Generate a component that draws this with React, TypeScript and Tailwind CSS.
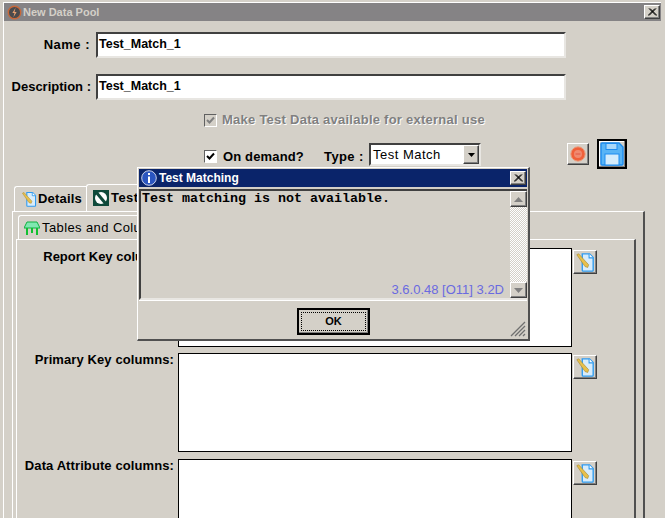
import React from 'react';

const raised = 'border border-t-white border-l-white border-b-[#404040] border-r-[#404040] shadow-[inset_-1px_-1px_0_#808080]';
const sunken = 'border-2 border-t-[#404040] border-l-[#404040] border-b-[#e8e6e2] border-r-[#e8e6e2]';
const boldText = 'font-bold text-black text-[13px] tracking-[0.1px]';

function LogoIcon() {
  return (
    <svg width="15" height="15" viewBox="0 0 14 14">
      <circle cx="7" cy="7" r="5.8" fill="#4a4a4c" stroke="#c8683a" strokeWidth="1.3" />
      <path d="M8 2.5 5 7.5h2L6 11.5l3-5H7z" fill="#e8a070" />
    </svg>
  );
}

function CloseX() {
  return (
    <svg width="9" height="8" viewBox="0 0 9 8">
      <path d="M1 0.5 8 7.5M2 0.5 9 7.5M8 0.5 1 7.5M7 0.5 0 7.5" stroke="#000" strokeWidth="1" />
    </svg>
  );
}

function DocPencil({ size = 22 }: { size?: number }) {
  return (
    <svg width={size} height={size} viewBox="0 0 22 22">
      <path d="M8 2h8l4 4v14a1 1 0 0 1-1 1H9a1 1 0 0 1-1-1z" fill="#d8ecfb" stroke="#2f9bf0" strokeWidth="1.5" />
      <path d="M15.5 2v4.5H20" fill="#fff" stroke="#2f9bf0" strokeWidth="1.2" />
      <path d="M2 3 4 2 15 14l-1 3-3-1z" fill="#e8c04c" stroke="#a88a30" strokeWidth="0.7" />
    </svg>
  );
}

function TableIcon() {
  return (
    <svg width="16" height="16" viewBox="0 0 16 16">
      <path d="M3 2h10l3 6H0z" fill="#7fe8b0" stroke="#10b040" strokeWidth="1" />
      <path d="M3 8v7M13 8v7M8 8v5" stroke="#10c030" strokeWidth="2" />
    </svg>
  );
}

function MatchIcon() {
  return (
    <svg width="16" height="16" viewBox="0 0 16 16">
      <rect width="16" height="16" fill="#0f4a3a" />
      <circle cx="8" cy="8" r="6" fill="#fff" />
      <path d="M3 2 13 14" stroke="#0f4a3a" strokeWidth="3" />
    </svg>
  );
}

function InfoIcon() {
  return (
    <svg width="16" height="16" viewBox="0 0 16 16">
      <circle cx="8" cy="8" r="7.3" fill="#2a55c0" stroke="#c8d0e8" strokeWidth="1" />
      <rect x="7" y="3" width="2" height="2" fill="#fff" />
      <rect x="7" y="6.5" width="2" height="6.5" fill="#fff" />
    </svg>
  );
}

function StopIcon() {
  return (
    <svg width="16" height="16" viewBox="0 0 16 16">
      <circle cx="8" cy="8" r="7.2" fill="#f0603a" stroke="#eaa080" strokeWidth="1" />
      <circle cx="8" cy="8" r="4" fill="#f08a70" />
      <rect x="5.5" y="7" width="5" height="2" fill="#e8705a" />
    </svg>
  );
}

function SaveIcon() {
  return (
    <svg width="24" height="24" viewBox="0 0 24 24">
      <path d="M1 2a1 1 0 0 1 1-1h17l4 4v17a1 1 0 0 1-1 1H2a1 1 0 0 1-1-1z" fill="#58b4f6" stroke="#1c8cf0" strokeWidth="1.4" />
      <rect x="6" y="1.5" width="11" height="6" fill="#a8d8fa" stroke="#1c8cf0" strokeWidth="1" />
      <rect x="5" y="12" width="14" height="11" fill="#d4ecfc" stroke="#1c8cf0" strokeWidth="1" />
    </svg>
  );
}

function Checkbox({ disabled }: { disabled?: boolean }) {
  return (
    <span className={`flex h-[13px] w-[13px] shrink-0 items-center justify-center border border-t-[#606060] border-l-[#606060] border-b-white border-r-white ${disabled ? 'bg-[#d4d0c8]' : 'bg-white'}`}>
      <svg width="9" height="9" viewBox="0 0 9 9">
        <path d="M1 4l2.5 2.5L8 1.5" fill="none" stroke={disabled ? '#808080' : '#000'} strokeWidth="2" />
      </svg>
    </span>
  );
}

function ColumnRow({ label, height, className, labelClass = '' }: { label: string; height: string; className: string; labelClass?: string }) {
  return (
    <div className={`flex ${className}`}>
      <div className={`w-[161px] shrink-0 pr-[4px] text-right leading-[14px] ${boldText} ${labelClass}`}>{label}</div>
      <div className={`w-[394px] shrink-0 border border-black bg-white ${height}`} />
      <div className={`ml-px mt-[2px] flex h-[24px] w-[24px] shrink-0 items-center justify-center ${raised} bg-[#d4d0c8]`}>
        <DocPencil size={20} />
      </div>
    </div>
  );
}

export default function App() {
  return (
    <div className="relative h-[518px] w-[665px] overflow-hidden bg-[#d4d0c8] font-['Liberation_Sans',sans-serif]">
      {/* Main window */}
      <div className="ml-[3px] mt-[2px] h-[516px] w-[658px] border-l border-t border-white">
        <div className="flex h-[18px] items-center justify-between bg-[#858385] pl-[3px] pr-[1px]">
          <div className="flex items-center gap-[1px]">
            <LogoIcon />
            <span className="text-[11px] font-bold text-[#d4d0c8]">New Data Pool</span>
          </div>
          <button className={`flex h-[14px] w-[16px] items-center justify-center bg-[#d4d0c8] ${raised}`}>
            <CloseX />
          </button>
        </div>

        <div className="mt-[11px] flex items-center">
          <div className="w-[86px] whitespace-nowrap text-right text-[13px] font-bold tracking-[0.5px] text-black">Name :</div>
          <div className={`ml-[6px] flex h-[26px] w-[470px] items-center bg-white pb-[2px] pl-[1px] text-[12.5px] font-bold text-black ${sunken}`}>Test_Match_1</div>
        </div>
        <div className="mt-[16px] flex items-center">
          <div className="w-[87px] whitespace-nowrap text-right text-[13px] font-bold text-black">Description :</div>
          <div className={`ml-[5px] flex h-[26px] w-[470px] items-center bg-white pb-[2px] pl-[1px] text-[12.5px] font-bold text-black ${sunken}`}>Test_Match_1</div>
        </div>

        <div className="mt-[13px] flex h-[14px] items-center pl-[200px]">
          <Checkbox disabled />
          <span className="ml-[5px] whitespace-nowrap text-[13px] font-bold tracking-[0.25px] text-[#808080] [text-shadow:1px_1px_0_#ffffff]">Make Test Data available for external use</span>
        </div>

        <div className="mt-[16px] flex h-[26px] items-start">
          <div className="mt-[4px] flex items-center pl-[200px]">
            <Checkbox />
            <span className="ml-[6px] w-[101px] whitespace-nowrap text-[13px] font-bold tracking-[0.15px] text-black">On demand?</span>
            <span className="w-[45px] whitespace-nowrap text-[13px] font-bold tracking-[0.4px] text-black">Type :</span>
          </div>
          <div className={`flex h-[23px] w-[112px] items-center justify-between bg-white pl-[2px] text-[13px] tracking-[0.5px] text-black ${sunken}`}>
            Test Match
            <span className={`flex h-[19px] w-[16px] items-center justify-center bg-[#d4d0c8] ${raised}`}>
              <svg width="7" height="4" viewBox="0 0 7 4"><path d="M0 0h7L3.5 4z" fill="#000" /></svg>
            </span>
          </div>
          <button className={`ml-[86px] flex h-[22px] w-[22px] items-center justify-center bg-[#d4d0c8] ${raised}`}>
            <StopIcon />
          </button>
          <button className="-mt-[4px] ml-[8px] flex h-[30px] w-[30px] items-center justify-center border-2 border-black bg-[#d4d0c8] shadow-[inset_-1px_-1px_0_#808080,inset_1px_1px_0_#ffffff]">
            <SaveIcon />
          </button>
        </div>

        {/* Tabs */}
        <div className="ml-[10px] mt-[15px] flex h-[27px] items-end">
          <div className="flex h-[25px] w-[72px] items-center gap-[1px] rounded-tl-[3px] border-l border-t border-white pl-[6px]">
            <DocPencil size={16} />
            <span className="text-[13px] font-bold tracking-[0.2px] text-black">Details</span>
          </div>
          <div className="flex h-[27px] w-[120px] items-center gap-[2px] rounded-tl-[3px] border-l border-t border-white pl-[6px]">
            <MatchIcon />
            <span className="whitespace-nowrap text-[13px] font-bold tracking-[0.4px] text-black">Test</span>
          </div>
        </div>

        <div className="ml-[8px] h-[400px] w-[633px] border-l border-r-2 border-t border-white border-r-[#505050] pl-[3px] pr-[8px]">
          <div className="ml-[2px] mt-[3px] flex h-[24px] w-[170px] items-center gap-[2px] rounded-tl-[3px] border-l border-t border-white pl-[5px]">
            <TableIcon />
            <span className="whitespace-nowrap text-[13px] tracking-[0.4px] text-black">Tables and Columns</span>
          </div>
          <div className="h-[400px] w-[620px] border-l border-r-2 border-t border-white border-r-[#505050] pt-[8px]">
            <ColumnRow label="Report Key columns:" height="h-[99px]" className="" labelClass="pt-[2px] tracking-[0px]" />
            <ColumnRow label="Primary Key columns:" height="h-[99px]" className="mt-[6px]" />
            <ColumnRow label="Data Attribute columns:" height="h-[99px]" className="mt-[7px]" />
          </div>
        </div>
      </div>

      {/* Test Matching dialog */}
      <div className="absolute left-[137px] top-[167px] h-[174px] w-[393px] border border-b-2 border-r-2 border-l-white border-t-white border-b-[#505050] border-r-[#505050] bg-[#d4d0c8] p-px">
        <div className="flex h-[18px] items-center justify-between bg-[#0a246a] pl-[2px] pr-[1px]">
          <div className="flex items-center gap-[2px]">
            <InfoIcon />
            <span className="text-[12px] font-bold text-white">Test Matching</span>
          </div>
          <button className={`flex h-[14px] w-[16px] items-center justify-center bg-[#d4d0c8] ${raised}`}>
            <CloseX />
          </button>
        </div>
        <div className={`relative mt-[2px] flex h-[111px] ${sunken} border-r-0`}>
          <div className="flex-1 pl-px font-['Liberation_Mono',monospace] text-[13.33px] font-bold leading-[16px] text-black">
            Test matching is not available.
          </div>
          <div className="flex w-[17px] flex-col">
            <div className={`flex h-[16px] items-center justify-center bg-[#d4d0c8] ${raised}`}>
              <svg width="9" height="5" viewBox="0 0 9 5"><path d="M4.5 0 9 5H0z" fill="#808080" /></svg>
            </div>
            <div className="flex-1 bg-[repeating-conic-gradient(#ffffff_0_25%,#d4d0c8_0_50%)] bg-[length:2px_2px]" />
            <div className={`flex h-[16px] items-center justify-center bg-[#d4d0c8] ${raised}`}>
              <svg width="9" height="5" viewBox="0 0 9 5"><path d="M0 0h9L4.5 5z" fill="#808080" /></svg>
            </div>
          </div>
          <span className="absolute bottom-[-1px] right-[23px] whitespace-nowrap text-[13px] text-[#6a6ae0]">3.6.0.48 [O11] 3.2D</span>
        </div>
        <div className="relative flex h-[39px] justify-center border-t border-white pl-[1px] pt-[7px]">
          <button className="flex h-[27px] w-[73px] items-center justify-center border-2 border-black bg-[#d4d0c8] shadow-[inset_-1px_-1px_0_#808080]">
            <span className="flex h-[19px] w-[65px] items-center justify-center border border-dotted border-black text-[11px] font-bold text-black">OK</span>
          </button>
          <svg className="absolute bottom-[2px] right-[1px]" width="16" height="16" viewBox="0 0 16 16">
            <path d="M1 15 15 1M5 15 15 5M9 15l6-6M13 15l2-2" stroke="#707070" strokeWidth="1.3" />
          </svg>
        </div>
      </div>
    </div>
  );
}
